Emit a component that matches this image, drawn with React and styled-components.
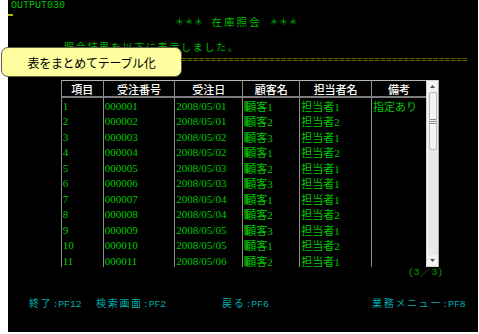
import React from 'react';
import styled, { createGlobalStyle } from 'styled-components';

const GlobalStyle = createGlobalStyle`
  html, body {
    margin: 0;
    padding: 0;
    background: #fff;
  }
  body {
    font-family: "Liberation Mono", "Noto Sans CJK JP", monospace;
  }
`;

const Screen = styled.div`
  position: relative;
  margin-left: 8px;
  width: 470px;
  height: 332px;
  background: #000;
  display: flex;
  flex-direction: column;
`;

const Line = styled.div`
  display: flex;
  align-items: center;
  flex: none;
  height: ${(p) => p.$h}px;
  margin-top: ${(p) => p.$mt || 0}px;
  padding-left: ${(p) => p.$indent || 0}px;
  color: ${(p) => p.$color || '#00b800'};
  line-height: ${(p) => p.$h}px;
  white-space: nowrap;
`;

const Rule = styled(Line)`
  width: 404px;
  overflow: hidden;
`;

const Mono = styled.span`
  font-family: "Liberation Mono", monospace;
  font-size: 9.75px;
`;

const Wide = styled.span`
  font-family: "Noto Sans CJK JP", sans-serif;
  font-size: 10px;
  letter-spacing: 1.7px;
`;

const ScreenId = styled.span`
  font-family: "Liberation Mono", monospace;
  font-size: 10px;
  color: #00c000;
`;

const Cursor = styled.div`
  flex: none;
  width: 5px;
  height: 2px;
  margin-top: 2px;
  background: #b8b800;
`;

const Stars = styled.span`
  font-family: "Noto Sans CJK JP", sans-serif;
  font-size: 9px;
  letter-spacing: 0.5px;
  margin-left: ${(p) => p.$ml || 0}px;
`;

const TitleText = styled.span`
  font-family: "Noto Sans CJK JP", sans-serif;
  font-size: 10.5px;
  letter-spacing: 2px;
  margin-left: 8px;
`;

const TableWrap = styled.div`
  display: flex;
  flex: none;
  margin-top: 14px;
  margin-left: 52.7px;
  height: 187px;
`;

const Grid = styled.div`
  display: grid;
  grid-template-columns: 42px 71.6px 68px 57px 71.7px 55.3px;
  grid-template-rows: 18px;
  grid-auto-rows: 15.5px;
  height: 187px;
  overflow: hidden;
`;

const HeadCell = styled.div`
  box-sizing: border-box;
  display: flex;
  align-items: center;
  justify-content: center;
  border-top: 1px solid #b4b4b4;
  border-bottom: 2px solid #7c7c7c;
  border-left: 1px solid #8c8c8c;
  color: #fff;
  font-family: "Noto Sans CJK JP", sans-serif;
  font-size: 11px;
  font-weight: 500;
`;

const Cell = styled.div`
  box-sizing: border-box;
  display: flex;
  align-items: center;
  padding-left: 1px;
  border-left: 1px solid #8c8c8c;
  color: #00c800;
  font-family: "Liberation Serif", "Noto Sans CJK JP", serif;
  font-size: 11px;
  white-space: nowrap;
  overflow: hidden;
`;

const Mark = styled.span`
  display: inline-block;
  width: 4px;
  height: 10px;
  margin-right: -3px;
  background: #007800;
`;

const ScrollBar = styled.div`
  box-sizing: border-box;
  width: 13px;
  height: 187px;
  display: flex;
  flex-direction: column;
  background: #ebebeb;
  border: 1px solid #d4d4d4;
  border-right-color: #a8a8a8;
`;

const ArrowBtn = styled.div`
  flex: none;
  height: 11px;
  display: flex;
  align-items: center;
  justify-content: center;
  background: #f3f3f3;
`;

const Track = styled.div`
  flex: 1;
  padding: 0 1px;
  background: #e8e8e8;
  border-left: 1px solid #fafafa;
`;

const Thumb = styled.div`
  box-sizing: border-box;
  height: 58px;
  display: flex;
  align-items: center;
  justify-content: center;
  background: #f4f4f4;
  border: 1px solid #bcbcbc;
  border-radius: 2px;
`;

const Footer = styled.div`
  display: grid;
  grid-template-columns: 67px 126px 150px auto;
  align-items: center;
  flex: none;
  height: 13px;
  margin-top: 15px;
  padding-left: 21px;
  color: #00acac;
  white-space: nowrap;
`;

const Callout = styled.div`
  position: absolute;
  left: -7px;
  top: 47px;
  box-sizing: border-box;
  width: 181px;
  height: 30px;
  display: flex;
  align-items: center;
  justify-content: center;
  background: #ffffa0;
  border: 1px solid #5e5e44;
  border-radius: 7px;
  color: #000;
  font-family: "Noto Sans CJK JP", sans-serif;
  font-size: 12px;
  letter-spacing: -0.3px;
`;

const columns = ['項目', '受注番号', '受注日', '顧客名', '担当者名', '備考'];

const rows = [
  ['1', '000001', '2008/05/01', '顧客1', '担当者1', '指定あり'],
  ['2', '000002', '2008/05/01', '顧客2', '担当者2', ''],
  ['3', '000003', '2008/05/02', '顧客3', '担当者1', ''],
  ['4', '000004', '2008/05/02', '顧客1', '担当者2', ''],
  ['5', '000005', '2008/05/03', '顧客2', '担当者1', ''],
  ['6', '000006', '2008/05/03', '顧客3', '担当者1', ''],
  ['7', '000007', '2008/05/04', '顧客1', '担当者1', ''],
  ['8', '000008', '2008/05/04', '顧客2', '担当者2', ''],
  ['9', '000009', '2008/05/05', '顧客3', '担当者1', ''],
  ['10', '000010', '2008/05/05', '顧客1', '担当者2', ''],
  ['11', '000011', '2008/05/06', '顧客2', '担当者1', ''],
];

const keys = [
  { label: '終了', key: ':PF12' },
  { label: '検索画面', key: ':PF2' },
  { label: '戻る', key: ':PF6' },
  { label: '業務メニュー', key: ':PF8' },
];

const Arrow = ({ up }) => (
  <svg width="5" height="3" viewBox="0 0 5 3">
    <path d={up ? 'M0 3 L2.5 0 L5 3 Z' : 'M0 0 L2.5 3 L5 0 Z'} fill="#505050" />
  </svg>
);

const Grip = () => (
  <svg width="6" height="5" viewBox="0 0 6 5">
    <path d="M0 0.5 H6 M0 2.5 H6 M0 4.5 H6" stroke="#8a8a8a" strokeWidth="1" />
  </svg>
);

export default function App() {
  return (
    <>
      <GlobalStyle />
      <Screen>
        <Line $h={12} $indent={3}>
          <ScreenId>OUTPUT030</ScreenId>
        </Line>
        <Cursor />
        <Line $h={12} $indent={167}>
          <Stars>＊＊＊</Stars>
          <TitleText>在庫照会</TitleText>
          <Stars $ml={8}>＊＊＊</Stars>
        </Line>
        <Line $h={12} $mt={13} $indent={56}>
          <Wide>照会結果を以下に表示しました。</Wide>
        </Line>
        <Rule $h={13} $indent={56} $color="#b0b000">
          <Mono>{'='.repeat(69)}</Mono>
        </Rule>

        <TableWrap>
          <Grid>
            {columns.map((c) => (
              <HeadCell key={c}>{c}</HeadCell>
            ))}
            {rows.map((r) =>
              r.map((v, i) => (
                <Cell key={r[0] + '-' + i}>
                  {i === 3 && <Mark />}
                  {v}
                </Cell>
              ))
            )}
          </Grid>
          <ScrollBar>
            <ArrowBtn>
              <Arrow up />
            </ArrowBtn>
            <Track>
              <Thumb>
                <Grip />
              </Thumb>
            </Track>
            <ArrowBtn>
              <Arrow />
            </ArrowBtn>
          </ScrollBar>
        </TableWrap>

        <Line $h={12} $indent={400} $color="#00a000">
          <Mono>(3</Mono>
          <Wide>／</Wide>
          <Mono>3)</Mono>
        </Line>

        <Footer>
          {keys.map((k) => (
            <span key={k.label}>
              <Wide>{k.label}</Wide>
              <Mono>{k.key}</Mono>
            </span>
          ))}
        </Footer>

        <Callout>表をまとめてテーブル化</Callout>
      </Screen>
    </>
  );
}
